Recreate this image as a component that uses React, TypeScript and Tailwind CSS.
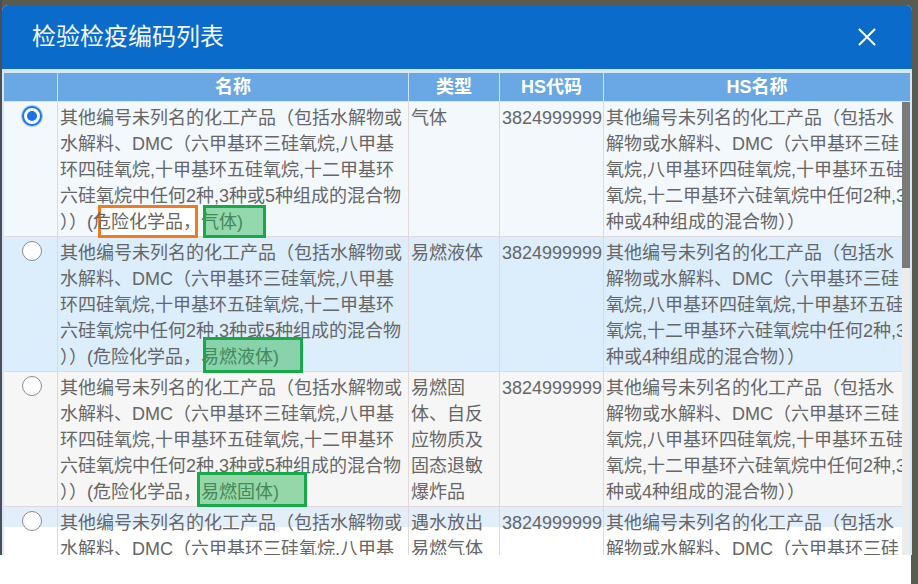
import React from "react";

type Box = { left: number; top: number; width: number; height: number; kind: "orange" | "green" };

type Row = {
  selected: boolean;
  bg: string;
  suffix: string;
  type: string[];
  boxes: Box[];
};

const nameLines = (suffix: string) => [
  "其他编号未列名的化工产品（包括水解物或",
  "水解料、DMC（六甲基环三硅氧烷,八甲基",
  "环四硅氧烷,十甲基环五硅氧烷,十二甲基环",
  "六硅氧烷中任何2种,3种或5种组成的混合物",
  `））(危险化学品，${suffix})`,
];

const hsLines = [
  "其他编号未列名的化工产品（包括水",
  "解物或水解料、DMC（六甲基环三硅",
  "氧烷,八甲基环四硅氧烷,十甲基环五硅",
  "氧烷,十二甲基环六硅氧烷中任何2种,3",
  "种或4种组成的混合物））",
];

const rows: Row[] = [
  {
    selected: true,
    bg: "bg-[#f3f8fd]",
    suffix: "气体",
    type: ["气体"],
    boxes: [
      { left: 40, top: 103, width: 100, height: 33, kind: "orange" },
      { left: 145, top: 103, width: 63, height: 33, kind: "green" },
    ],
  },
  {
    selected: false,
    bg: "bg-[#dcedfb]",
    suffix: "易燃液体",
    type: ["易燃液体"],
    boxes: [{ left: 145, top: 100, width: 100, height: 36, kind: "green" }],
  },
  {
    selected: false,
    bg: "bg-[#f6f6f6]",
    suffix: "易燃固体",
    type: ["易燃固", "体、自反", "应物质及", "固态退敏", "爆炸品"],
    boxes: [{ left: 139, top: 100, width: 110, height: 35, kind: "green" }],
  },
  {
    selected: false,
    bg: "bg-[linear-gradient(to_bottom,#e2effb_20px,#ffffff_20px)]",
    suffix: "遇水放出易燃气体",
    type: ["遇水放出", "易燃气体"],
    boxes: [],
  },
];

function Radio({ on }: { on: boolean }) {
  if (on) {
    return (
      <div className="mt-[1px] w-[20px] h-[20px] rounded-full border-2 border-[#1f78e4] bg-white ring-1 ring-[#a8ccf4] flex items-center justify-center">
        <div className="w-[10px] h-[10px] rounded-full bg-[#1673ea]" />
      </div>
    );
  }
  return <div className="mt-[1px] w-[20px] h-[20px] rounded-full border-[1.5px] border-[#8c8c8c] bg-white" />;
}

function Lines({ lines }: { lines: string[] }) {
  return (
    <div className="relative z-[1]">
      {lines.map((l, i) => (
        <div key={i} className="whitespace-nowrap">
          {l}
        </div>
      ))}
    </div>
  );
}

export default function App() {
  const cell = "border-r border-b border-[#e2d8dc] pt-[3px] pb-[1px] pl-[2px]";
  return (
    <div className="w-[918px] h-[584px] overflow-hidden flex flex-col bg-[#595a50] font-[family-name:'Liberation_Sans','Noto_Sans_CJK_SC',sans-serif]">
      <div className="flex h-[555px] shrink-0">
        <div className="w-[2px] bg-[#4b4e57]" />
        <div className="w-[910px] mt-[5px] flex flex-col rounded-t-[6px] overflow-hidden bg-[#d6e8f8]">
          <div className="h-[64px] shrink-0 bg-[#0b6bca] flex items-center justify-between pl-[30px] pr-[36px]">
            <span className="text-[24px] leading-none text-[#f2f7ff]">检验检疫编码列表</span>
            <svg width="18" height="18" viewBox="0 0 18 18" fill="none">
              <path d="M1.5 1.5 L16.5 16.5 M16.5 1.5 L1.5 16.5" stroke="#ffffff" strokeWidth="2" strokeLinecap="round" />
            </svg>
          </div>
          <div className="flex-1 min-h-0 flex flex-col pt-[4px] px-[2px]">
            <div className="h-[29px] shrink-0 grid grid-cols-[54px_351px_91px_104px_306px] bg-[#69a7e5] border-b border-[#d3e6f8] text-white font-bold text-[18px] leading-[28px]">
              <div className="border-r border-[#cfe3f7]" />
              <div className="border-r border-[#cfe3f7] text-center">名称</div>
              <div className="border-r border-[#cfe3f7] text-center">类型</div>
              <div className="border-r border-[#cfe3f7] text-center">HS代码</div>
              <div className="text-center">HS名称</div>
            </div>
            <div className="flex-1 min-h-0 flex">
              <div className="w-[898px] overflow-hidden text-[18px] leading-[26px] text-[#666666]">
                {rows.map((r, i) => (
                  <div key={i} className={`grid grid-cols-[54px_351px_91px_104px_320px] ${r.bg}`}>
                    <div className={`${cell} pl-0 flex justify-center items-start`}>
                      <Radio on={r.selected} />
                    </div>
                    <div className={`${cell} relative`}>
                      <Lines lines={nameLines(r.suffix)} />
                      {r.boxes.map((b, j) => (
                        <div
                          key={j}
                          className={
                            b.kind === "orange"
                              ? "absolute z-0 border-[3px] border-[#ee7d22] bg-white"
                              : "absolute z-[2] border-[3px] border-[#16a849] bg-[#22b14c]/45"
                          }
                          style={{ left: b.left, top: b.top, width: b.width, height: b.height }}
                        />
                      ))}
                    </div>
                    <div className={cell}>
                      <Lines lines={r.type} />
                    </div>
                    <div className={cell}>3824999999</div>
                    <div className={`${cell} overflow-hidden`}>
                      <Lines lines={hsLines} />
                    </div>
                  </div>
                ))}
              </div>
              <div className="w-[8px] bg-[#ececec]">
                <div className="h-[166px] bg-[#7a7a7a]" />
              </div>
            </div>
          </div>
        </div>
        <div className="flex-1" />
      </div>
      <div className="flex h-[29px] shrink-0">
        <div className="w-[911px] bg-white" />
      </div>
    </div>
  );
}
